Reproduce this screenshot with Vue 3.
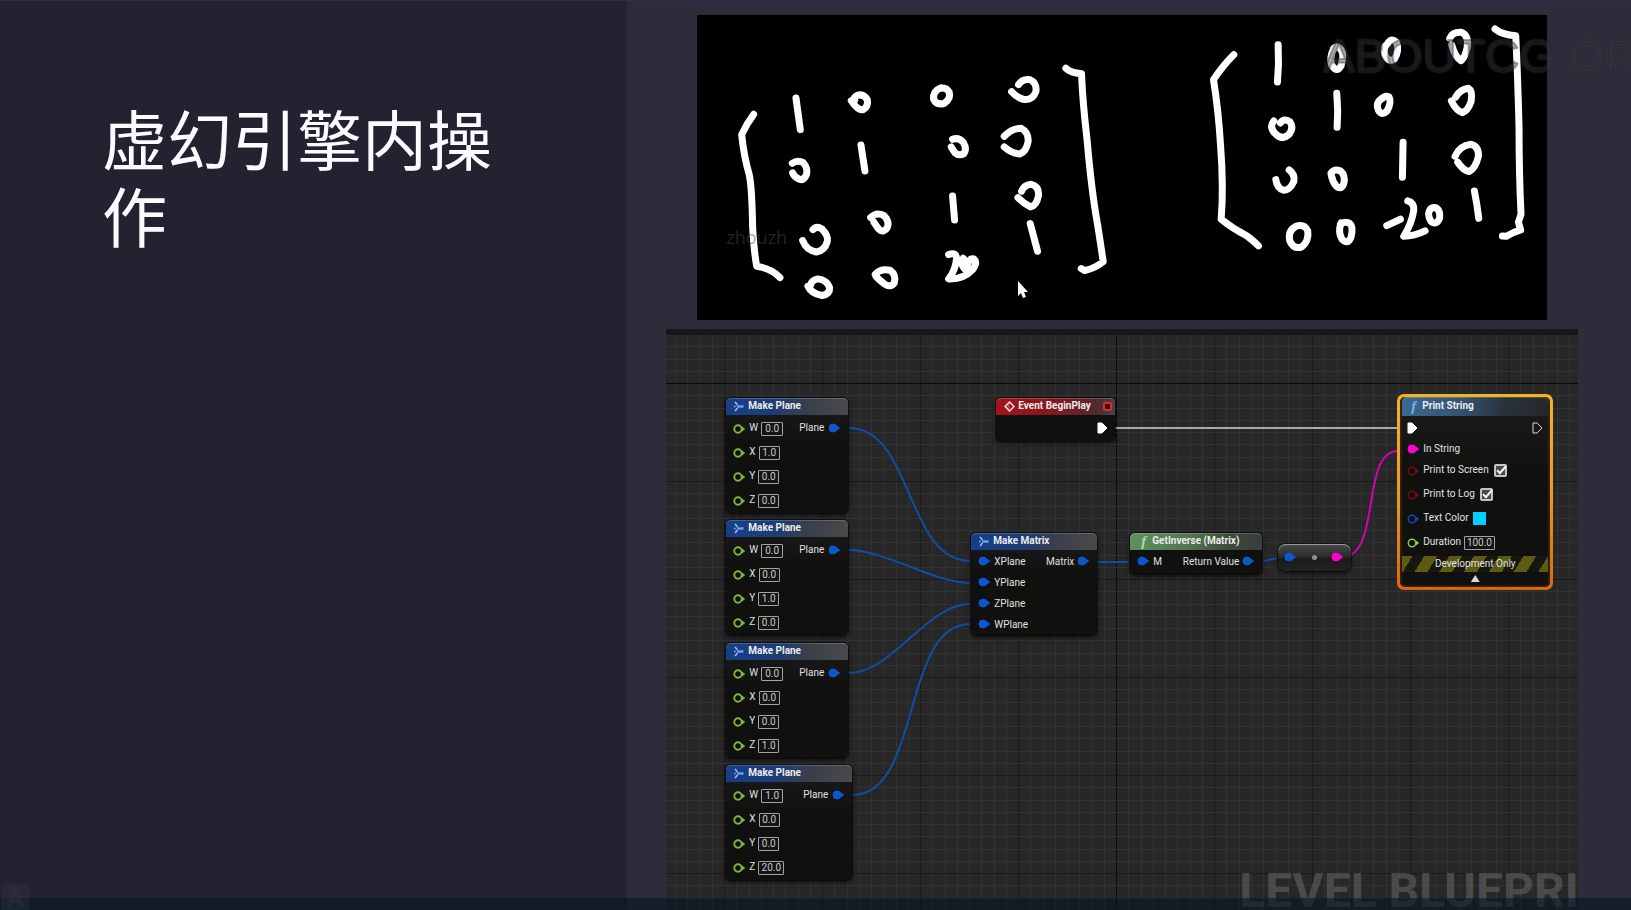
<script setup>
import { h, reactive } from 'vue'

const BLUE = '#0a57d0'
const GREEN = '#7cb83a'

const Pin = (props) =>
  h('svg', { class: 'pin', width: 13, height: 10, viewBox: '0 0 13 10', 'aria-hidden': 'true' }, [
    h('circle', {
      cx: 5, cy: 5, r: props.hollow ? 3.7 : 4,
      fill: props.hollow ? '#0c0d0c' : props.color,
      stroke: props.color,
      'stroke-width': props.thin ? 1.5 : props.hollow ? 1.9 : 1
    }),
    h('path', { d: 'M9 2.6L12.2 5L9 7.4Z', fill: props.color })
  ])
Pin.props = { color: String, hollow: Boolean, thin: Boolean }

const Exec = (props) =>
  h('svg', { class: 'exec', width: 11, height: 12, viewBox: '0 0 11 12', 'aria-hidden': 'true' }, [
    h('path', {
      d: 'M1 1H5L10 6L5 11H1Z',
      fill: props.hollow ? 'none' : '#fff',
      stroke: props.hollow ? '#d4d4d4' : '#fff',
      'stroke-width': 1,
      'stroke-linejoin': 'round'
    })
  ])
Exec.props = { hollow: Boolean }

const MakeIcon = () =>
  h('svg', { class: 'glyph', width: 11, height: 11, viewBox: '0 0 11 11', 'aria-hidden': 'true' }, [
    h('path', { d: 'M1 1L3.5 4M1 10L3.5 7M0 5.5H1.5', stroke: '#9db9e8', 'stroke-width': 1.6, fill: 'none' }),
    h('path', { d: 'M3 5.5H9.5', stroke: '#6fa0f5', 'stroke-width': 2.4 })
  ])

const planes = reactive([
  { place: 'p1', f: { W: '0.0', X: '1.0', Y: '0.0', Z: '0.0' } },
  { place: 'p2', f: { W: '0.0', X: '0.0', Y: '1.0', Z: '0.0' } },
  { place: 'p3', f: { W: '0.0', X: '0.0', Y: '0.0', Z: '1.0' } },
  { place: 'p4', f: { W: '1.0', X: '0.0', Y: '0.0', Z: '20.0' } }
])
const print = reactive({ screen: true, log: true, color: '#00cfff', duration: '100.0' })

const CELL = 98
const lines = (origin, from, to, strong) =>
  Array.from({ length: to - from + 1 }, (_, k) => {
    const i = k + from
    return {
      at: Math.round(origin + (i * CELL) / 8),
      kind: i === strong ? 'axis' : i % 8 === 0 ? 'major' : 'minor'
    }
  })
const cols = lines(58, -4, 160, 32)
const rows = lines(54, -4, 90, 0)
</script>

<template>
  <main class="slide">
    <section class="side">
      <h1>虚幻引擎内操作</h1>
    </section>

    <section class="stage">
      <figure class="board">
        <svg class="ink" viewBox="0 0 850 305" role="img" aria-label="两个 4×4 矩阵">
          <g transform="translate(-7 -14) scale(.33333)">
            <path d="M191 340Q170 368 155 401Q162 468 178 522Q186 560 188 680Q192 750 200 796Q245 803 270 830" />
            <path d="M318 291L331 386" />
            <path d="M484 299Q504 330 520 326Q536 316 532 296Q520 276 500 284Q488 292 494 298" />
            <path d="M752 261Q728 270 731 295Q740 314 763 307Q784 292 778 274Q768 256 748 263" />
            <path d="M986 251Q998 232 1020 236Q1042 246 1038 272Q1028 300 1000 295Q978 288 965 272" />
            <path d="M307 487Q322 476 340 485Q354 502 350 520Q342 540 328 535Q312 528 308 516" />
            <path d="M513 432L525 510" />
            <path d="M788 415Q806 408 820 424Q832 444 822 458Q808 466 796 456Q788 446 784 438" />
            <path d="M943 406Q966 382 994 382Q1016 394 1015 420Q1010 452 990 459Q966 458 943 438" />
            <path d="M369 686Q380 674 396 684Q416 704 412 722Q404 750 380 753Q350 750 338 719" />
            <path d="M542 650Q560 632 582 644Q600 662 592 680Q580 698 566 684Q554 668 552 664" />
            <path d="M788 585L794 657" />
            <path d="M995 571Q1002 552 1024 550Q1048 556 1046 584Q1040 614 1022 618Q1002 608 984 590" />
            <path d="M1021 668L1043 751" />
            <path d="M354 856Q364 878 396 884Q420 880 419 860Q412 838 384 834Q364 838 362 852" />
            <path d="M556 820Q572 802 600 808Q620 822 613 846Q602 862 582 848Q566 836 558 826" />
            <path d="M776 761Q800 752 800 774Q796 810 776 834Q820 836 848 806Q864 784 852 774Q836 772 832 794Q838 812 826 806Q810 790 820 772" />
            <path d="M1128 202Q1142 216 1175 218Q1178 300 1192 420Q1205 570 1223 670Q1234 740 1240 782Q1216 802 1184 809L1174 803" />
          </g>
          <g transform="translate(483 -14) scale(.33333)">
            <path d="M162 161Q130 192 101 236Q116 330 122 430Q132 560 124 655Q160 684 200 704Q224 722 236 735" />
            <path d="M295 131Q298 190 293 243" />
            <path d="M462 142Q448 170 456 192Q470 218 484 194Q494 160 484 146Q472 132 462 142" />
            <path d="M624 128Q608 140 616 162Q626 186 644 174Q660 148 650 124Q636 110 626 124" />
            <path d="M810 112Q818 92 846 94Q868 104 862 140Q856 170 844 179Q826 168 816 132" />
            <path d="M471 277Q476 330 472 379" />
            <path d="M282 360Q268 376 284 396Q306 420 326 402Q344 380 330 362Q312 350 302 366" />
            <path d="M606 292Q586 306 596 328Q606 346 622 330Q636 304 628 288Q616 282 606 294" />
            <path d="M828 288Q840 266 866 262Q880 270 874 302Q864 330 848 335Q830 330 815 300" />
            <path d="M670 424L668 529" />
            <path d="M328 507Q346 520 342 542Q330 568 312 568Q292 564 288 536" />
            <path d="M454 516Q464 502 482 510Q498 524 492 548Q484 568 470 556Q458 542 454 520" />
            <path d="M826 466Q840 434 874 430Q898 436 896 466Q888 502 868 512Q850 508 834 484" />
            <path d="M346 678Q324 690 330 720Q342 746 366 738Q388 720 384 690Q374 668 348 676" />
            <path d="M484 666Q474 692 486 714Q504 734 514 708Q522 676 508 666Q492 660 482 670" />
            <path d="M621 674L662 655M684 600Q704 606 702 628Q696 668 672 706Q704 706 736 690" />
            <path d="M752 624Q740 638 754 662Q772 674 780 650Q782 628 768 620Q756 618 750 628" />
            <path d="M884 570Q892 610 897 652" />
            <path d="M946 84Q968 102 1008 104Q1014 220 1018 380Q1018 520 1024 640L1016 664L1023 687Q1000 694 980 706L968 705" />
          </g>
        </svg>
        <span class="mark user">zhouzh</span>
        <span class="mark site">ABOUTCG.ORG</span>
        <svg class="cursor" width="13" height="18" viewBox="0 0 13 18" aria-hidden="true">
          <path d="M1 0V15L4 12L6 17L9 16L7 11H11Z" fill="#fff" />
        </svg>
      </figure>

      <div class="graph">
        <svg class="wires" width="1800" height="1000" aria-hidden="true">
          <line v-for="c in cols" :key="'c' + c.at" :x1="c.at" :x2="c.at" y1="0" y2="1000" :class="c.kind" />
          <line v-for="r in rows" :key="'r' + r.at" :y1="r.at" :y2="r.at" x1="0" x2="1800" :class="r.kind" />
          <g class="wire">
            <path d="M174 99H183C247 99 240 232 304 232H310" />
            <path d="M174 221H183C218 221 269 254 304 254H310" />
            <path d="M174 344H183C226 344 261 275 304 275H310" />
            <path d="M178 466H187C255 466 236 295 304 295H310" />
            <path d="M424 233H471M590 233C602 233 606 228 620 228" />
          </g>
          <path class="wire pink" d="M676 228C716 228 694 122 732 122" />
          <path class="wire white" d="M444 99H731" />
        </svg>

        <strong class="watermark">LEVEL BLUEPRINT</strong>

        <article v-for="(p, n) in planes" :key="p.place" class="node plane" :class="p.place">
          <header class="blue"><MakeIcon />Make Plane</header>
          <div class="body split">
            <div>
              <div v-for="(v, k) in p.f" :key="k" class="field">
                <Pin :color="GREEN" hollow />
                <label :for="k + n">{{ k }}</label>
                <input :id="k + n" v-model="p.f[k]" type="text" :class="{ first: k === 'W', long: v.length > 3 }" />
              </div>
            </div>
            <div class="out">Plane<Pin :color="BLUE" /></div>
          </div>
        </article>

        <article class="node event">
          <header class="red">
            <svg class="glyph" width="11" height="11" viewBox="0 0 11 11" aria-hidden="true">
              <path d="M5.5 1L10 5.5L5.5 10L1 5.5Z" fill="none" stroke="#f1dada" stroke-width="1.5" />
              <path d="M1 5.5L5.5 1V10Z" fill="#f1dada" fill-opacity=".25" />
            </svg>Event BeginPlay
            <i class="delegate"></i>
          </header>
          <div class="exec-row"><Exec /></div>
        </article>

        <article class="node matrix">
          <header class="blue"><MakeIcon />Make Matrix</header>
          <div class="body split">
            <div>
              <div v-for="k in ['XPlane', 'YPlane', 'ZPlane', 'WPlane']" :key="k" class="in"><Pin :color="BLUE" />{{ k }}</div>
            </div>
            <div class="in">Matrix<Pin :color="BLUE" /></div>
          </div>
        </article>

        <article class="node inverse">
          <header class="green"><i class="fn">f</i>GetInverse (Matrix)</header>
          <div class="body split">
            <div class="in"><Pin :color="BLUE" />M</div>
            <div class="in">Return Value<Pin :color="BLUE" /></div>
          </div>
        </article>

        <div class="node convert"><Pin :color="BLUE" /><i></i><Pin color="#ff00d0" /></div>

        <div class="selected">
          <article class="node print">
            <header class="steel"><i class="fn">f</i>Print String</header>
            <div class="row execs"><Exec /><Exec hollow /></div>
            <div class="row string"><Pin color="#ff00d0" />In String</div>
            <div class="row"><Pin color="#7c0a12" hollow thin /><label for="scr">Print to Screen</label><input id="scr" v-model="print.screen" type="checkbox" /></div>
            <div class="row"><Pin color="#7c0a12" hollow thin /><label for="log">Print to Log</label><input id="log" v-model="print.log" type="checkbox" /></div>
            <div class="row"><Pin color="#0d4bb0" hollow thin /><label for="col">Text Color</label><input id="col" v-model="print.color" type="color" /></div>
            <div class="row"><Pin color="#86cf45" hollow thin /><label for="dur">Duration</label><input id="dur" v-model="print.duration" type="text" /></div>
            <div class="hazard">Development Only</div>
            <button type="button" class="fold" aria-label="收起"></button>
          </article>
        </div>
      </div>
    </section>

    <div class="dock"></div>
    <div class="badge" aria-hidden="true">A</div>
  </main>
</template>

<style>
body { margin: 0; background: #262130; }
</style>

<style scoped>
.slide {
  position: relative;
  display: grid;
  grid-template-columns: 5fr 8fr;
  min-height: 100vh;
  box-sizing: border-box;
  border-top: 1px solid #22345a;
  overflow: hidden;
  background: #262130;
  font-family: Roboto, "Liberation Sans", "Noto Sans CJK SC", sans-serif;
}
.side { padding: 98px 128px 0 102px; }
h1 {
  margin: 0;
  color: #fdfbff;
  font: 400 65px/77px "Noto Sans CJK SC", sans-serif;
}
.stage {
  display: flex;
  flex-direction: column;
  gap: 9px;
  min-width: 0;
  padding: 14px 53px 0 39px;
  background: #2e2c3a;
}
.board {
  position: relative;
  margin: 0 31px;
  background: #000;
}
.ink { display: block; width: 100%; height: auto; }
.ink path {
  fill: none;
  stroke: #fff;
  stroke-width: 21;
  stroke-linecap: round;
  stroke-linejoin: round;
}
.mark { position: absolute; white-space: nowrap; }
.user {
  top: 210px;
  left: 29px;
  color: rgba(72, 72, 72, .5);
  font: 18px/24px "Open Sans", sans-serif;
}
.site {
  top: 13px;
  left: 626px;
  color: rgba(0, 0, 0, .2);
  -webkit-text-stroke: 2px rgba(36, 35, 42, .4);
  text-shadow: 0 0 3px rgba(110, 110, 120, .35);
  font: 47px/56px "Liberation Sans", sans-serif;
}
.cursor { position: absolute; top: 266px; left: 320px; }

.graph {
  position: relative;
  flex: 1;
  min-height: 580px;
  overflow: hidden;
  background: #272728;
  box-shadow: inset 0 6px 0 #17171b;
  color: #e0e0e0;
  font-size: 10px;
}
.wires {
  position: absolute;
  top: 0;
  left: 0;
  mask-image: linear-gradient(transparent 6px, #000 6px);
}
.wires line { stroke-width: 1; shape-rendering: crispEdges; }
.minor { stroke: #323234; }
.major { stroke: #1a1a1b; }
.axis { stroke: #0b0b0c; }
.wire { fill: none; stroke: #124da3; stroke-width: 2; }
.pink { stroke: #cf06ab; }
.white { stroke: #a9a9a9; }
.watermark {
  position: absolute;
  top: 534px;
  left: 573px;
  color: rgba(110, 110, 112, .5);
  font-size: 48px;
  line-height: 56px;
  white-space: nowrap;
}

.node {
  position: absolute;
  box-sizing: border-box;
  border-radius: 5px;
  background: linear-gradient(#1a1b1b, #10110f 40%, #10110e);
  box-shadow: 0 0 0 1px rgba(8, 8, 8, .7), 0 2px 5px rgba(0, 0, 0, .7);
}
.plane { left: 60px; width: 122px; }
.p1 { top: 69px; }
.p2 { top: 191px; }
.p3 { top: 314px; }
.p4 { top: 436px; width: 126px; }
.event { top: 69px; left: 330px; width: 119px; }
.matrix { top: 204px; left: 305px; width: 126px; }
.inverse { top: 204px; left: 464px; width: 132px; }
.inverse { padding-bottom: 2px; }

header {
  display: flex;
  align-items: center;
  gap: 3px;
  height: 17px;
  padding: 0 3px 0 8px;
  border-radius: 5px 5px 0 0;
  box-shadow: inset 0 1px 0 rgba(255, 255, 255, .18);
  color: #ececec;
  font-size: 10px;
  font-weight: 700;
  line-height: 16px;
  white-space: nowrap;
}
.blue { background: linear-gradient(100deg, #173f86, #1d3d76 40%, #3a3f49 68%, #4a4a4a); }
.red { background: linear-gradient(100deg, #a3141b, #84171c 50%, #4d2b2d 85%, #474344); }
.green { background: linear-gradient(100deg, #5f9160, #52754f 45%, #3c4a3b 75%, #3a3d3a); }
.steel { background: linear-gradient(100deg, #3c6a90, #335472 40%, #28323c 70%, #252728); }
.glyph { flex: none; }
.fn {
  width: 11px;
  color: #9fe39d;
  font: italic 700 15px/16px "Liberation Serif", serif;
  text-align: center;
}
.steel .fn { color: #6db8f2; }
.delegate {
  box-sizing: border-box;
  width: 9px;
  height: 9px;
  margin-left: auto;
  border: 2px solid #e8262c;
  border-radius: 2px;
  background: #300;
}
.body { padding: 2px 7px 0; }
.matrix .body, .inverse .body { padding-top: 1px; }
.split { display: flex; justify-content: space-between; }
.pin, .exec { flex: none; display: block; }
.field { display: flex; align-items: center; height: 24px; }
.field .pin { margin-right: 3px; }
.field label { padding-bottom: 3px; }
input[type="text"] {
  box-sizing: border-box;
  width: 21px;
  height: 14px;
  margin: 0 0 0 3px;
  padding: 0;
  border: 1px solid #a3a3a3;
  border-radius: 1px;
  outline: 0;
  background: #141414;
  color: #c9c9c9;
  font: 10px/12px Roboto, sans-serif;
  text-align: center;
}
input.first { width: 22px; }
input.long { width: 26px; }
.out { display: flex; align-items: center; gap: 4px; height: 22px; }
.in { display: flex; align-items: center; height: 21px; gap: 3px; }
.exec-row { display: flex; justify-content: flex-end; align-items: center; height: 26px; padding-right: 7px; }
.convert {
  display: flex;
  align-items: center;
  justify-content: space-between;
  top: 215px;
  left: 612px;
  width: 73px;
  height: 27px;
  padding: 0 7px 0 6px;
  border-radius: 8px;
  background: linear-gradient(#4a4a4a, #2c2c2c 45%, #1b1b1b 55%, #232323);
  box-shadow: inset 0 1px 0 #9a9a9a, 0 0 0 1px rgba(8, 8, 8, .6), 0 2px 5px rgba(0, 0, 0, .7);
}
.convert i { width: 5px; height: 5px; border-radius: 50%; background: #8f8f8f; }

.selected {
  position: absolute;
  top: 65px;
  left: 731px;
  width: 150px;
  padding: 3px;
  border-radius: 7px;
  background: linear-gradient(#f5b324, #f09a1c 50%, #d9660f);
}
.print {
  position: relative;
  padding: 0 1px 5px;
  border-radius: 5px;
  box-shadow: inset 0 0 3px 1px #4a2d08;
}
.print header { height: 19px; margin: 0 1px 1px; padding-left: 6px; }
.row { display: flex; align-items: center; height: 24px; padding: 0 6px; }
.row .pin { margin-right: 3px; }
.row label { padding-bottom: 3px; }
.execs { justify-content: space-between; height: 22px; }
.string { height: 20px; }
input[type="checkbox"] {
  appearance: none;
  position: relative;
  width: 13px;
  height: 13px;
  margin: 0 0 0 5px;
  border-radius: 2px;
  background: #c4c4c4;
}
input[type="checkbox"]::before {
  content: "";
  position: absolute;
  inset: 2px;
  background: #4a4a4a;
}
input[type="checkbox"]:checked::after {
  content: "";
  position: absolute;
  top: 0;
  left: 5px;
  width: 3px;
  height: 8px;
  border: solid #f4f4f4;
  border-width: 0 2px 2px 0;
  transform: rotate(42deg);
}
input[type="color"] {
  appearance: none;
  width: 13px;
  height: 13px;
  margin: 0 0 0 4px;
  padding: 0;
  border: 0;
  background: none;
}
input[type="color"]::-webkit-color-swatch-wrapper { padding: 0; }
input[type="color"]::-webkit-color-swatch { border: 0; }
.row input[type="text"] { width: 31px; }
.hazard {
  height: 16px;
  margin: 1px 1px 0;
  background: repeating-linear-gradient(122deg, #5e5a14 0 9px, #17170f 9px 19px, #5e5a14 19px 21px);
  color: #e2e2e2;
  line-height: 15px;
  text-align: center;
}
.fold {
  display: block;
  width: 9px;
  height: 7px;
  margin: 3px auto 0;
  padding: 0;
  border: 0;
  background: #d8d8d8;
  clip-path: polygon(50% 0, 100% 100%, 0 100%);
}

.dock {
  position: absolute;
  right: 0;
  bottom: 0;
  left: 0;
  height: 12px;
  background: rgba(6, 22, 34, .6);
}
.badge {
  position: absolute;
  bottom: 0;
  left: 1px;
  width: 28px;
  height: 26px;
  border-radius: 5px 5px 0 0;
  background: rgba(48, 62, 76, .25);
  color: rgba(70, 50, 76, .3);
  font-size: 26px;
  font-weight: 900;
  line-height: 26px;
  text-align: center;
}
</style>
